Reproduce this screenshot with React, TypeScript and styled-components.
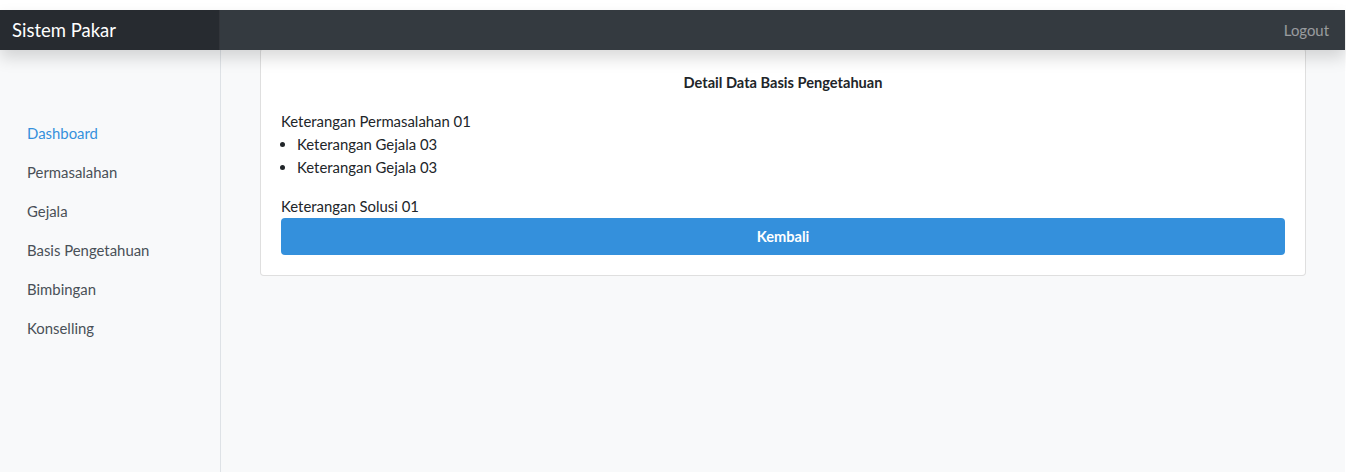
import React from 'react'
import styled, { createGlobalStyle } from 'styled-components'

const GlobalStyle = createGlobalStyle`
  html, body {
    margin: 0;
    padding: 0;
    background: #ffffff;
  }

  body {
    font-family: Lato, 'Noto Sans', sans-serif;
    font-size: 14.9px;
    line-height: 23px;
    color: #212529;
  }
`

const Page = styled.div`
  padding-top: 10px;
  padding-right: 1px;
  height: 472px;
  box-sizing: border-box;
  display: flex;
  flex-direction: column;
  overflow: hidden;
`

const Navbar = styled.nav`
  height: 40px;
  display: flex;
  align-items: center;
  background: #343a40;
  position: relative;
  z-index: 2;
  box-shadow: 0 8px 16px rgba(0, 0, 0, 0.15);
`

const Brand = styled.a`
  width: 220px;
  height: 100%;
  box-sizing: border-box;
  display: flex;
  align-items: center;
  padding: 0 12px;
  background: rgba(0, 0, 0, 0.25);
  color: #ffffff;
  font-size: 18.5px;
  text-decoration: none;
  border-right: 1px solid rgba(255, 255, 255, 0.05);
`

const NavRight = styled.div`
  flex: 1;
  display: flex;
  justify-content: flex-end;
  padding-right: 16px;
`

const NavLink = styled.a`
  color: rgba(255, 255, 255, 0.5);
  font-size: 14.9px;
  text-decoration: none;
`

const Body = styled.div`
  flex: 1;
  display: flex;
  background: #f8f9fa;
`

const Sidebar = styled.aside`
  width: 221px;
  box-sizing: border-box;
  border-right: 1px solid #dee2e6;
  padding-top: 64px;
  display: flex;
  flex-direction: column;
`

type SideLinkProps = {
  readonly $active?: boolean
}

const SideLink = styled.a<SideLinkProps>`
  padding: 8px 27px;
  font-size: 14.9px;
  color: ${props => (props.$active ? '#3490dc' : '#495057')};
  text-decoration: none;
`

const Main = styled.main`
  flex: 1;
  padding: 0 39px;
`

const Card = styled.section`
  margin-top: -2px;
  background: #ffffff;
  border: 1px solid rgba(0, 0, 0, 0.125);
  border-radius: 4px;
  padding: 22px 20px 20px;
`

const CardTitle = styled.h5`
  margin: 0 0 16px;
  text-align: center;
  font-size: 14.6px;
  font-weight: 700;
  line-height: 23px;
`

const Text = styled.p`
  margin: 0;
`

const List = styled.ul`
  margin: 0 0 16px;
  padding-left: 16px;
`

const Button = styled.button`
  display: block;
  width: 100%;
  height: 37px;
  border: none;
  border-radius: 4px;
  background: #3490dc;
  color: #ffffff;
  font-family: inherit;
  font-size: 14.6px;
  font-weight: 700;
  cursor: pointer;
`

const menu = [
  'Dashboard',
  'Permasalahan',
  'Gejala',
  'Basis Pengetahuan',
  'Bimbingan',
  'Konselling',
]

const App = () => {
  return (
    <>
      <GlobalStyle />
      <Page>
        <Navbar>
          <Brand href="#">Sistem Pakar</Brand>
          <NavRight>
            <NavLink href="#">Logout</NavLink>
          </NavRight>
        </Navbar>
        <Body>
          <Sidebar>
            {menu.map((item, i) => (
              <SideLink key={item} href="#" $active={i === 0}>
                {item}
              </SideLink>
            ))}
          </Sidebar>
          <Main>
            <Card>
              <CardTitle>Detail Data Basis Pengetahuan</CardTitle>
              <Text>Keterangan Permasalahan 01</Text>
              <List>
                <li>Keterangan Gejala 03</li>
                <li>Keterangan Gejala 03</li>
              </List>
              <Text>Keterangan Solusi 01</Text>
              <Button>Kembali</Button>
            </Card>
          </Main>
        </Body>
      </Page>
    </>
  )
}

export default App
